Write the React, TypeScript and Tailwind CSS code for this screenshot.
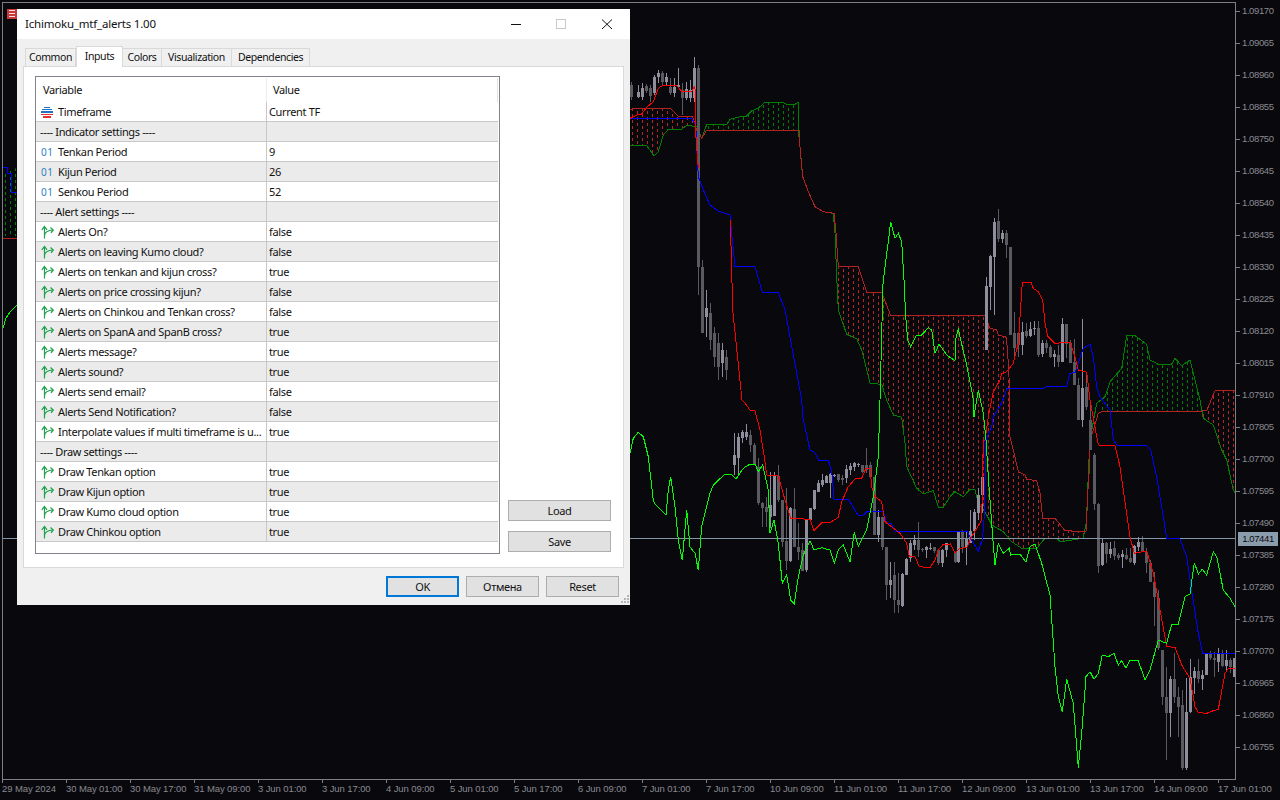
type Pt = [number, number];
// [x, wick top, wick bottom, body top, body bottom, light]
type Candle = [number, number, number, number, number, number];

// chart points were read off crops, so each run carries its crop's origin
const at = (ox: number, oy: number, pts: number[]): Pt[] => {
  const out: Pt[] = [];
  for (let i = 0; i < pts.length; i += 2) out.push([ox + pts[i] / 3, oy + pts[i + 1] / 3]);
  return out;
};
const toPoints = (pts: Pt[]) => pts.map((p) => `${p[0].toFixed(1)},${p[1].toFixed(1)}`).join(' ');

// the tenkan runs under the kijun between these two pieces
const tenkanHead: Pt[] = at(630, 50, [0, 205, 20, 195, 35, 192, 50, 172, 70, 155, 85, 115, 95, 108, 140, 107, 155, 124, 185, 124, 193, 110, 197, 125, 197, 250, 205, 355]);

const tenkan: Pt[] = [
  ...at(630, 50, [300, 510, 302, 555, 305, 660, 308, 780]),
  ...at(630, 400, [336, 0, 345, 10, 360, 30, 375, 33, 390, 90, 405, 185, 410, 225, 445, 228, 465, 300, 482, 355, 540, 358, 552, 392, 575, 368, 600, 368, 625, 352, 635, 305, 655, 260, 675, 237, 695, 235, 708, 205, 720, 205, 725, 260, 735, 290, 755, 305, 765, 365, 810, 400, 830, 430, 838, 470, 855, 470, 868, 500, 900, 503, 915, 480, 925, 450, 940, 433, 960, 433]),
  ...at(950, 440, [0, 310, 15, 340, 30, 325, 50, 323, 65, 290, 95, 240, 100, 0]),
  ...at(950, 200, [105, 720, 115, 650, 130, 575, 150, 540, 155, 520, 170, 515, 190, 490, 205, 430, 212, 320, 217, 247, 243, 247, 250, 265, 265, 275, 278, 300, 285, 370, 293, 408, 315, 430, 360, 427, 375, 470, 385, 510, 410, 517, 420, 600, 445, 735, 495, 737]),
  ...at(950, 440, [495, 17, 510, 80, 540, 290, 553, 340, 590, 333, 610, 400, 625, 480, 650, 620, 675, 622, 695, 675, 720, 715, 735, 800, 745, 818, 770, 820, 790, 812, 805, 808, 825, 700, 835, 685, 855, 685]),
];

const kijun: Pt[] = [
  ...at(630, 50, [0, 205, 185, 205, 197, 225, 200, 290, 205, 380, 220, 420, 240, 465, 265, 483, 300, 495, 305, 550, 315, 650, 375, 650, 397, 727, 445, 727, 465, 780]),
  ...at(630, 400, [515, 0, 518, 50, 540, 150, 555, 158, 565, 180, 595, 180, 605, 215, 612, 297, 655, 297, 685, 347, 700, 345, 710, 335, 760, 335, 770, 370, 785, 372, 795, 394, 960, 394]),
  ...at(950, 440, [50, 273, 65, 300, 85, 333, 97, 300, 102, 240, 108, 0]),
  ...at(950, 200, [125, 680, 130, 650, 155, 610, 170, 567, 280, 565, 290, 560, 350, 558, 360, 520, 375, 518, 385, 490, 400, 445, 420, 433, 430, 470, 440, 560, 450, 590, 480, 630, 490, 720, 500, 735, 590, 737]),
  ...at(950, 440, [590, 17, 602, 30, 620, 110, 640, 230, 650, 295, 690, 297, 710, 350, 720, 420, 745, 580, 758, 640, 855, 640]),
];

const chikou: Pt[] = [
  ...at(630, 400, [0, 160, 10, 115, 25, 97, 40, 110, 55, 170, 70, 300, 75, 312, 108, 345, 115, 270, 122, 230, 135, 320, 145, 420, 157, 480, 170, 330, 180, 440, 195, 460, 205, 510, 215, 380, 220, 360, 240, 280, 250, 255, 285, 222, 305, 225, 318, 237, 340, 205, 360, 192, 375, 192, 385, 215, 398, 195, 415, 270, 420, 400, 432, 360, 445, 430, 457, 550, 470, 525, 482, 600, 493, 612, 505, 530, 520, 465, 540, 422, 552, 450, 575, 443, 600, 450, 613, 490, 625, 450, 640, 435, 660, 485, 673, 397, 685, 438, 710, 390, 730, 290, 745, 170, 750, 0]),
  ...at(630, 50, [757, 780, 757, 720, 765, 650, 775, 575, 782, 515, 795, 565, 805, 550, 815, 575, 822, 690]),
  ...at(840, 240, [197, 230, 203, 300, 212, 320, 230, 285, 245, 285, 265, 263, 275, 270, 285, 340, 297, 312, 320, 345, 345, 362, 348, 295, 355, 265, 362, 300, 380, 375, 395, 450, 400, 480]),
  ...at(950, 200, [72, 650, 85, 570, 100, 640, 108, 720]),
  ...at(950, 440, [115, 110, 125, 250, 128, 290, 135, 375, 145, 310, 160, 340, 178, 325, 182, 345, 210, 343, 228, 367, 240, 320, 255, 312, 275, 370, 300, 465, 315, 680, 325, 770, 337, 815, 350, 718, 370, 790, 385, 983, 395, 880, 408, 710, 420, 695, 432, 718, 445, 700, 457, 645, 475, 650, 492, 640, 505, 675, 515, 662, 528, 685, 540, 660, 565, 662, 585, 720, 600, 690, 625, 600, 650, 610, 665, 552, 685, 552, 705, 470, 720, 462, 733, 368, 745, 402, 757, 388, 770, 405, 790, 335, 800, 350, 820, 450, 840, 475, 855, 500]),
];

const spanRed: Pt[] = [
  ...at(630, 50, [0, 180, 10, 175, 120, 175, 145, 198, 185, 198, 190, 205, 200, 240, 215, 265, 230, 240, 505, 240, 510, 290, 518, 380, 535, 425, 555, 470, 580, 485, 612, 490, 618, 550, 625, 650, 685, 650, 710, 727, 755, 727]),
  ...at(840, 240, [152, 227, 435, 227, 450, 265, 470, 270, 475, 285, 495, 290]),
  ...at(950, 200, [168, 412, 172, 440, 177, 530, 180, 710, 190, 750]),
  ...at(950, 440, [205, 95, 225, 105, 230, 118, 260, 122, 270, 160, 278, 235, 315, 235, 345, 272, 408, 275, 412, 180, 418, 90, 420, 0]),
  ...at(950, 200, [430, 690, 445, 640, 460, 633, 755, 633, 770, 632, 795, 572, 857, 572]),
];

const spanGreen: Pt[] = [
  ...at(630, 50, [0, 287, 50, 287, 60, 300, 72, 318, 85, 305, 100, 255, 115, 238, 155, 238, 170, 226, 200, 230, 205, 240, 215, 265, 230, 224, 290, 224, 300, 208, 330, 200, 350, 198, 365, 182, 385, 175, 403, 158, 460, 158, 470, 163, 495, 163, 505, 157, 507, 240, 510, 290, 515, 350, 518, 380, 535, 425, 555, 470, 580, 485, 610, 490, 615, 550, 620, 680, 625, 780]),
  ...at(840, 240, [20, 283, 50, 296, 65, 330, 90, 430, 125, 433, 140, 480]),
  ...at(630, 400, [790, 45, 815, 52, 825, 130, 830, 200, 860, 265, 880, 282, 910, 272, 925, 322, 940, 322, 960, 290]),
  ...at(950, 440, [15, 155, 40, 170, 60, 148, 75, 150, 85, 190, 110, 225, 125, 255, 160, 275, 185, 305, 215, 325, 260, 325, 285, 295, 320, 295, 330, 305, 400, 295, 410, 240, 415, 100, 420, 0]),
  ...at(950, 200, [440, 610, 465, 590, 480, 545, 515, 505, 530, 407, 555, 407, 590, 433, 600, 480, 630, 495, 665, 492, 675, 475, 695, 497, 720, 480, 750, 600, 760, 655, 790, 675, 815, 750]),
  ...at(950, 440, [830, 60, 850, 150, 855, 160]),
];

const redClouds: Pt[][] = [
  at(630, 50, [0, 180, 10, 175, 120, 175, 145, 198, 185, 198, 190, 205, 200, 232, 170, 226, 155, 238, 115, 238, 100, 255, 85, 305, 72, 318, 60, 300, 50, 287, 0, 287]),
  [
    ...at(630, 50, [625, 650, 685, 650, 710, 727, 755, 727]),
    ...at(840, 240, [152, 227, 435, 227]),
    ...at(950, 200, [122, 385, 140, 390, 145, 405, 168, 412, 172, 440, 177, 530, 180, 710, 190, 750]),
    ...at(950, 440, [205, 95, 225, 105, 230, 118, 260, 122, 270, 160, 278, 235, 315, 235, 345, 272, 408, 275, 400, 295, 330, 305, 320, 295, 285, 295, 260, 325, 215, 325, 185, 305, 160, 275, 125, 255, 110, 225, 85, 190, 75, 150, 60, 148, 40, 170, 15, 155, 0, 160]),
    ...at(630, 400, [960, 290, 940, 322, 925, 322, 910, 272, 880, 282, 860, 265, 830, 200, 825, 130, 815, 52, 790, 45, 770, 0]),
    ...at(840, 240, [140, 480, 125, 433, 90, 430, 65, 330, 50, 296, 20, 283, 0, 240]),
    ...at(630, 50, [625, 780, 620, 680]),
  ],
  [
    ...at(950, 200, [755, 633, 770, 632, 795, 572, 857, 572]),
    ...at(950, 440, [857, 172, 830, 60, 800, 0]),
    ...at(950, 200, [790, 675, 760, 655]),
  ],
];

const greenClouds: Pt[][] = [
  at(630, 50, [230, 224, 290, 224, 300, 208, 330, 200, 350, 198, 365, 182, 385, 175, 403, 158, 460, 158, 470, 163, 495, 163, 505, 157, 507, 240, 230, 240]),
  at(950, 200, [450, 633, 465, 590, 480, 545, 515, 505, 530, 407, 555, 407, 590, 433, 600, 480, 630, 495, 665, 492, 675, 475, 695, 497, 720, 480, 750, 600, 755, 633]),
  [[3, 172], [17, 168], [17, 236], [3, 236]],
];

const candleRuns: { ox: number; oy: number; rows: Candle[] }[] = [
  {
    ox: 630,
    oy: 50,
    rows: [
      [3, 95, 150, 105, 140, 0], [25, 105, 145, 125, 140, 1], [37, 100, 150, 113, 140, 1], [49, 103, 130, 108, 122, 0],
      [61, 105, 155, 113, 138, 0], [73, 75, 135, 80, 130, 1], [85, 60, 100, 68, 82, 1], [97, 62, 108, 70, 95, 0],
      [109, 70, 105, 80, 95, 1], [121, 85, 135, 110, 130, 0], [133, 85, 140, 110, 130, 1], [145, 55, 110, 105, 110, 1],
      [157, 100, 195, 120, 145, 0], [169, 95, 150, 118, 145, 1], [181, 90, 155, 120, 145, 1], [193, 20, 155, 55, 145, 1],
      [205, 45, 735, 55, 650, 0], [217, 630, 850, 650, 850, 0], [229, 720, 860, 775, 800, 1], [241, 760, 900, 790, 870, 0],
      [253, 830, 950, 850, 920, 0], [265, 850, 990, 880, 950, 0], [277, 880, 980, 900, 940, 1], [289, 900, 990, 920, 960, 0],
    ],
  },
  {
    ox: 630,
    oy: 400,
    rows: [
      [312, 100, 225, 165, 195, 1], [324, 100, 225, 110, 175, 1], [336, 90, 130, 95, 115, 1], [348, 72, 120, 97, 110, 1],
      [360, 90, 155, 105, 135, 0], [372, 130, 195, 135, 195, 0], [384, 175, 315, 200, 310, 0], [396, 305, 380, 310, 325, 0],
      [408, 290, 380, 320, 335, 0], [420, 215, 385, 315, 350, 1], [432, 215, 345, 228, 347, 1], [444, 195, 305, 228, 300, 0],
      [456, 300, 440, 300, 425, 0], [468, 265, 510, 422, 482, 0], [480, 320, 485, 325, 482, 1], [492, 265, 440, 328, 440, 0],
      [504, 370, 480, 440, 455, 0], [516, 430, 510, 450, 512, 0], [528, 360, 515, 360, 510, 1], [540, 325, 360, 325, 360, 1],
      [552, 270, 330, 270, 328, 1], [564, 240, 275, 250, 275, 1], [576, 222, 260, 240, 255, 1], [588, 225, 250, 228, 248, 1],
      [600, 220, 295, 222, 250, 1], [612, 222, 232, 224, 228, 1], [624, 222, 245, 222, 240, 0], [636, 225, 255, 235, 240, 0],
      [648, 195, 250, 207, 235, 1], [660, 190, 225, 197, 210, 1], [672, 185, 212, 190, 200, 1], [684, 188, 200, 192, 195, 1],
      [696, 195, 220, 195, 217, 0], [708, 145, 220, 195, 210, 0], [720, 185, 235, 195, 232, 0], [732, 230, 405, 232, 405, 0],
      [744, 330, 425, 350, 405, 1], [756, 350, 450, 352, 440, 0], [768, 440, 600, 440, 555, 0], [780, 485, 595, 540, 555, 1],
      [792, 485, 640, 525, 600, 0], [804, 520, 640, 600, 615, 0], [816, 520, 620, 522, 618, 1], [828, 475, 525, 477, 525, 1],
      [840, 420, 485, 430, 475, 1], [852, 405, 450, 420, 435, 1], [864, 365, 470, 420, 450, 0], [876, 445, 455, 448, 451, 0],
      [888, 438, 475, 440, 450, 1], [900, 430, 450, 445, 448, 1], [912, 440, 460, 442, 453, 0], [924, 450, 495, 450, 490, 0],
      [936, 448, 500, 450, 488, 1], [948, 428, 470, 430, 450, 1],
    ],
  },
  {
    ox: 950,
    oy: 200,
    rows: [
      [109, 230, 450, 258, 450, 1], [121, 165, 330, 168, 260, 1], [133, 55, 345, 65, 170, 1], [145, 28, 125, 63, 118, 0],
      [157, 90, 130, 98, 118, 1], [169, 90, 175, 98, 135, 0], [181, 140, 405, 140, 405, 0], [193, 335, 470, 400, 445, 0],
      [205, 395, 470, 398, 435, 0], [217, 365, 465, 397, 435, 1], [229, 370, 415, 393, 407, 0], [241, 365, 410, 387, 408, 1],
      [253, 362, 405, 383, 388, 1], [265, 362, 470, 385, 465, 0], [277, 420, 470, 428, 463, 1], [289, 420, 460, 430, 443, 0],
      [301, 435, 475, 440, 470, 0], [313, 450, 500, 462, 470, 1], [325, 435, 500, 465, 485, 0], [337, 355, 485, 372, 485, 1],
      [349, 372, 475, 372, 432, 0], [361, 420, 490, 430, 488, 0], [373, 418, 520, 487, 555, 0], [385, 535, 660, 555, 660, 0],
      [397, 358, 682, 565, 660, 1], [409, 520, 630, 560, 620, 0], [421, 600, 750, 660, 750, 0],
    ],
  },
  {
    ox: 950,
    oy: 440,
    rows: [
      [14, 335, 368, 335, 365, 0], [25, 275, 370, 275, 365, 1], [37, 270, 340, 275, 320, 0], [49, 275, 375, 295, 320, 1],
      [61, 210, 310, 272, 310, 1], [73, 208, 300, 215, 272, 1], [85, 145, 240, 165, 220, 1], [97, 100, 220, 110, 165, 1],
      [433, 40, 210, 45, 193, 0], [445, 190, 398, 192, 378, 0], [457, 295, 378, 310, 375, 1], [469, 305, 370, 308, 342, 0],
      [481, 305, 355, 328, 342, 1], [493, 302, 360, 325, 347, 0], [505, 340, 360, 345, 355, 0], [517, 330, 385, 343, 350, 1],
      [529, 325, 360, 345, 357, 0], [541, 325, 370, 355, 367, 0], [553, 315, 375, 318, 370, 1], [565, 290, 332, 306, 320, 1],
      [577, 288, 335, 306, 335, 0], [589, 325, 400, 335, 370, 0], [601, 360, 425, 370, 425, 0], [613, 395, 558, 425, 470, 0],
      [625, 450, 630, 475, 625, 0], [637, 630, 795, 630, 772, 0], [649, 680, 960, 770, 818, 0], [661, 708, 890, 716, 818, 1],
      [673, 640, 790, 716, 770, 0], [685, 742, 890, 770, 800, 0], [697, 750, 990, 795, 985, 0], [709, 715, 990, 815, 985, 1],
      [721, 658, 820, 710, 815, 1], [733, 682, 762, 692, 715, 1], [745, 658, 730, 692, 718, 0], [757, 690, 750, 705, 718, 1],
      [769, 640, 705, 642, 705, 1], [781, 632, 660, 642, 655, 0], [793, 635, 710, 655, 660, 0], [805, 625, 695, 642, 665, 1],
      [817, 630, 680, 642, 678, 0], [829, 630, 690, 660, 678, 1], [841, 655, 700, 660, 680, 0], [853, 655, 710, 655, 710, 1],
    ],
  },
];

const prices = [
  '1.09170', '1.09065', '1.08960', '1.08855', '1.08750', '1.08645', '1.08540', '1.08435', '1.08330', '1.08225', '1.08120', '1.08015',
  '1.07910', '1.07805', '1.07700', '1.07595', '1.07490', '1.07385', '1.07280', '1.07175', '1.07070', '1.06965', '1.06860', '1.06755',
];

const times = [
  '29 May 2024', '30 May 01:00', '30 May 17:00', '31 May 09:00', '3 Jun 01:00', '3 Jun 17:00', '4 Jun 09:00', '5 Jun 01:00', '5 Jun 17:00', '6 Jun 09:00',
  '7 Jun 01:00', '7 Jun 17:00', '10 Jun 09:00', '11 Jun 01:00', '11 Jun 17:00', '12 Jun 09:00', '13 Jun 01:00', '13 Jun 17:00', '14 Jun 09:00', '17 Jun 01:00',
];

type Row = { kind: 'enum' | 'int' | 'bool' | 'section'; name: string; value?: string };

const rows: Row[] = [
  { kind: 'enum', name: 'Timeframe', value: 'Current TF' },
  { kind: 'section', name: '---- Indicator settings ----' },
  { kind: 'int', name: 'Tenkan Period', value: '9' },
  { kind: 'int', name: 'Kijun Period', value: '26' },
  { kind: 'int', name: 'Senkou Period', value: '52' },
  { kind: 'section', name: '---- Alert settings ----' },
  { kind: 'bool', name: 'Alerts On?', value: 'false' },
  { kind: 'bool', name: 'Alerts on leaving Kumo cloud?', value: 'false' },
  { kind: 'bool', name: 'Alerts on tenkan and kijun cross?', value: 'true' },
  { kind: 'bool', name: 'Alerts on price crossing kijun?', value: 'false' },
  { kind: 'bool', name: 'Alerts on Chinkou and Tenkan cross?', value: 'false' },
  { kind: 'bool', name: 'Alerts on SpanA and SpanB cross?', value: 'true' },
  { kind: 'bool', name: 'Alerts message?', value: 'true' },
  { kind: 'bool', name: 'Alerts sound?', value: 'true' },
  { kind: 'bool', name: 'Alerts send email?', value: 'false' },
  { kind: 'bool', name: 'Alerts Send Notification?', value: 'false' },
  { kind: 'bool', name: 'Interpolate values if multi timeframe is u...', value: 'true' },
  { kind: 'section', name: '---- Draw settings ----' },
  { kind: 'bool', name: 'Draw Tenkan option', value: 'true' },
  { kind: 'bool', name: 'Draw Kijun option', value: 'true' },
  { kind: 'bool', name: 'Draw Kumo cloud option', value: 'true' },
  { kind: 'bool', name: 'Draw Chinkou option', value: 'true' },
];

const tabs = [
  { name: 'Common', w: 'w-[51px]' },
  { name: 'Inputs', w: 'w-[47px]' },
  { name: 'Colors', w: 'w-[39px]' },
  { name: 'Visualization', w: 'w-[70px]' },
  { name: 'Dependencies', w: 'w-[78px]' },
];

// dashed columns clipped to the cloud outline
function Hatch({ id, cloud, color }: { id: string; cloud: Pt[]; color: string }) {
  const xs = cloud.map((p) => p[0]);
  const ys = cloud.map((p) => p[1]);
  const left = Math.floor(Math.min(...xs));
  const right = Math.ceil(Math.max(...xs));
  const top = Math.floor(Math.min(...ys));
  const bottom = Math.ceil(Math.max(...ys));
  const cols: number[] = [];
  for (let x = left + 2; x < right; x += 5) cols.push(x);
  return (
    <g>
      <clipPath id={id}>
        <polygon points={toPoints(cloud)} />
      </clipPath>
      <g clipPath={`url(#${id})`}>
        {cols.map((x, i) => (
          <line
            key={x}
            x1={x + 0.5}
            x2={x + 0.5}
            y1={top}
            y2={bottom}
            stroke={color}
            strokeDasharray="3 3"
            strokeDashoffset={i % 2 ? 3 : 0}
          />
        ))}
      </g>
    </g>
  );
}

function Chart() {
  return (
    <svg width={1232} height={776} viewBox="3 3 1232 776" shapeRendering="crispEdges" className="block">
      {redClouds.map((c, i) => (
        <Hatch key={i} id={`red-cloud-${i}`} cloud={c} color="#b82424" />
      ))}
      {greenClouds.map((c, i) => (
        <Hatch key={i} id={`green-cloud-${i}`} cloud={c} color="#008000" />
      ))}
      <polyline points={toPoints(spanGreen)} fill="none" stroke="#008000" />
      <polyline points={toPoints(spanRed)} fill="none" stroke="#b22222" />
      {candleRuns.map((run) =>
        run.rows.map(([x, hi, lo, top, bot, light]) => {
          const cx = Math.round(run.ox + x / 3);
          const fill = light ? '#8e8e9c' : '#5a5a60';
          return (
            <g key={`${run.ox}-${run.oy}-${x}`} fill={fill}>
              <rect x={cx} y={run.oy + hi / 3} width={1} height={(lo - hi) / 3} />
              <rect x={cx - 1} y={run.oy + top / 3} width={3} height={Math.max(1, (bot - top) / 3)} />
            </g>
          );
        }),
      )}
      <line x1="3" y1="538" x2="1235" y2="538" stroke="#8496a6" />
      <polyline points={toPoints(kijun)} fill="none" stroke="#0000ff" />
      <polyline points={toPoints(tenkanHead)} fill="none" stroke="#ff0000" />
      <polyline points={toPoints(tenkan)} fill="none" stroke="#ff0000" />
      <polyline points={toPoints(chikou)} fill="none" stroke="#00ff00" />
      <polyline points="3,328 6,318 10,312 17,305" fill="none" stroke="#00ff00" />
      <polyline points="3,238 17,238" fill="none" stroke="#b22222" />
      <polyline points="3,167 7,167 7,173 11,173 11,192 17,192" fill="none" stroke="#0000ff" />
    </svg>
  );
}

function EnumIcon() {
  return (
    <svg width="12" height="11" viewBox="0 0 12 11" shapeRendering="crispEdges">
      <rect x="3" y="0" width="6" height="1" fill="#1f72c4" />
      <rect x="1" y="2" width="10" height="1" fill="#1f72c4" />
      <rect x="0" y="4" width="12" height="2" fill="#1f72c4" />
      <rect x="0" y="7" width="12" height="1" fill="#e8302a" />
      <rect x="2" y="9" width="8" height="2" fill="#e8302a" />
    </svg>
  );
}

function BoolIcon() {
  return (
    <svg width="14" height="14" viewBox="0 0 14 14" fill="none" stroke="#1ba14a" strokeWidth="1.2" className="shrink-0">
      <path d="M3.5 13.5V2" />
      <path d="M0.8 4.8 3.5 1.5 6 4.8" />
      <path d="M3.5 10C4 7 6 5.5 12 5" />
      <path d="M9.5 2.5 12.3 5 10 7.8" />
    </svg>
  );
}

function RowIcon({ kind }: { kind: Row['kind'] }) {
  if (kind === 'enum') return <EnumIcon />;
  if (kind === 'bool') return <BoolIcon />;
  return <span className="text-[10px] leading-none tracking-[0.5px] text-[#2f7fc1]">01</span>;
}

function Button({ label, primary }: { label: string; primary?: boolean }) {
  return (
    <div
      className={`flex h-[21px] items-center justify-center bg-[#e1e1e1] pt-px text-[#111] ${
        primary ? 'border-2 border-[#0078d7]' : 'border border-[#adadad]'
      } ${label === 'Load' || label === 'Save' ? 'w-[103px]' : 'w-[73px]'}`}
    >
      {label}
    </div>
  );
}

function Dialog() {
  return (
    <div className="absolute top-[9px] left-[17px] flex h-[596px] w-[613px] flex-col bg-[#f0f0f0] font-['Noto_Sans',sans-serif] text-[11px] tracking-[-0.35px] text-[#111]">
      <div className="flex h-[30px] shrink-0 items-center bg-white pl-[8px]">
        <span className="flex-1 text-[11.5px] tracking-[-0.2px]">Ichimoku_mtf_alerts 1.00</span>
        <svg width="120" height="12" viewBox="0 0 120 12" fill="none" className="mr-[13px]">
          <path d="M14 6.5H24" stroke="#111" />
          <rect x="59.5" y="1.5" width="9" height="9" stroke="#c9c9c9" />
          <path d="M105 1.5 115 11M115 1.5 105 11" stroke="#111" />
        </svg>
      </div>

      <div className="flex h-[27px] shrink-0 items-end pl-[8px] text-[10.5px] tracking-[-0.4px]">
        {tabs.map((t) =>
          t.name === 'Inputs' ? (
            <div
              key={t.name}
              className={`z-10 -mb-px flex h-[21px] items-start justify-center border border-b-0 border-[#d9d9d9] bg-white pt-[2px] ${t.w}`}
            >
              {t.name}
            </div>
          ) : (
            <div
              key={t.name}
              className={`flex h-[18px] items-center justify-center border border-b-0 border-l-0 border-[#d9d9d9] bg-[#f0f0f0] pt-px first:border-l ${t.w}`}
            >
              {t.name}
            </div>
          ),
        )}
      </div>

      <div className="mx-[6px] flex h-[502px] shrink-0 gap-[8px] border border-[#d9d9d9] bg-white pt-[9px] pr-[11px] pl-[11px]">
        <div className="h-[478px] w-[465px] shrink-0 border border-[#82828a]">
          <div className="flex h-[25px] items-center pt-px">
            <div className="flex h-full w-[231px] items-center border-r border-[#ececec] pl-[7px]">Variable</div>
            <div className="mr-[1px] flex h-full flex-1 items-center border-r border-[#e4e4e4] pl-[6px]">Value</div>
          </div>
          {rows.map((r, i) => (
            <div key={r.name} className={`mr-[1px] flex h-[20px] border-b border-[#c8c8c8] ${i % 2 ? 'bg-[#ebebeb]' : 'bg-white'}`}>
              {r.kind === 'section' ? (
                <div className="flex w-[231px] items-center border-r border-[#c8c8c8] pt-px pl-[4px]">{r.name}</div>
              ) : (
                <div className="flex w-[231px] items-center gap-[4px] border-r border-[#c8c8c8] pt-px pl-[5px]">
                  <span className="flex w-[13px] shrink-0 items-center">
                    <RowIcon kind={r.kind} />
                  </span>
                  <span className="whitespace-nowrap">{r.name}</span>
                </div>
              )}
              <div className="flex items-center pt-px pl-[2px]">{r.value}</div>
            </div>
          ))}
        </div>
        <div className="flex flex-1 flex-col justify-end gap-[10px] pb-[15px]">
          <Button label="Load" />
          <Button label="Save" />
        </div>
      </div>

      <div className="mt-[8px] flex justify-end gap-[7px] pr-[11px]">
        <Button label="OK" primary />
        <Button label="Отмена" />
        <Button label="Reset" />
      </div>

      <svg width="8" height="8" viewBox="0 0 8 8" fill="#b5b5b5" className="absolute right-[1px] bottom-[2px]">
        <rect x="6" y="0" width="2" height="2" />
        <rect x="3" y="3" width="2" height="2" />
        <rect x="6" y="3" width="2" height="2" />
        <rect x="0" y="6" width="2" height="2" />
        <rect x="3" y="6" width="2" height="2" />
        <rect x="6" y="6" width="2" height="2" />
      </svg>
    </div>
  );
}

export default function App() {
  return (
    <div className="relative h-[800px] w-[1280px] overflow-hidden bg-[#08080d] pt-[2px] pl-[2px] font-['Liberation_Sans',sans-serif] text-[#8a8a90]">
      <div className="flex h-[778px]">
        <div className="h-[778px] w-[1234px] border border-[#7e7e84]">
          <Chart />
        </div>
        <div className="-mt-[7px] flex flex-col">
          {prices.map((p) => (
            <div key={p} className="flex h-[32px] items-center gap-[2px]">
              <span className="h-px w-[4px] bg-[#7e7e84]" />
              <span className="text-[9.5px] tracking-[-0.4px]">{p}</span>
            </div>
          ))}
        </div>
      </div>
      <div className="flex">
        {times.map((t) => (
          <div key={t} className="relative w-[64px] shrink-0 pt-[2px] text-[9.5px] tracking-[-0.1px] whitespace-nowrap">
            <span className="absolute top-[-1px] left-0 h-[4px] w-px bg-[#7e7e84]" />
            {t}
          </div>
        ))}
      </div>

      <div className="absolute top-[532px] left-[1238px] flex h-[14px] w-[40px] items-center justify-center bg-[#8b9cac] text-[9.5px] tracking-[-0.4px] text-[#0b0b10]">
        1.07441
      </div>

      <svg width="10" height="10" viewBox="0 0 10 10" className="absolute top-[9px] left-[7px]">
        <rect width="10" height="10" fill="#c8383a" />
        <rect x="2" y="1" width="6" height="1" fill="#f5dede" />
        <rect x="2" y="4" width="6" height="1" fill="#f5dede" />
        <rect x="2" y="7" width="6" height="1" fill="#f5dede" />
      </svg>

      <Dialog />
    </div>
  );
}
